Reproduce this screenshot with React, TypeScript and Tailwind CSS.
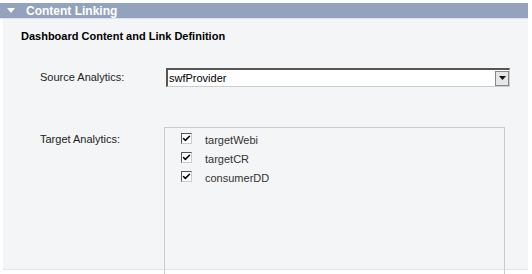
import { Check } from 'lucide-react'

const targets = ['targetWebi', 'targetCR', 'consumerDD']

export default function App() {
  return (
    <div className="w-[532px] h-[274px] overflow-hidden bg-white pt-[3px] pr-[4px] font-['Liberation_Sans',Arial,sans-serif] text-[11px] text-[#222]">
      {/* Section header */}
      <div className="h-[16px] bg-[#94a3bd] flex items-center border-b border-[#d9e2ee]">
        <svg width="8" height="6" viewBox="0 0 8 6" className="ml-[7px] mr-[11px]">
          <path d="M0 0h8L4 5z" fill="#fff" />
        </svg>
        <span className="text-white font-bold text-[12px] leading-none">Content Linking</span>
      </div>

      <div className="bg-[#f4f5f7] h-[251px] ml-[3px] pl-[18px] pt-[10px] border-b border-[#e2e4e7]">
        <h2 className="font-bold text-[11px] text-black leading-[14px]">
          Dashboard Content and Link Definition
        </h2>

        {/* Source */}
        <div className="flex items-center mt-[25px]">
          <span className="w-[145px] pl-[19px]">Source Analytics:</span>
          <div className="w-[344px] h-[19px] bg-white border-t-2 border-l-2 border-t-[#555] border-l-[#555] border-b border-r border-b-[#ccc] border-r-[#ccc] flex items-center">
            <span className="flex-1 pl-[1px] text-black">swfProvider</span>
            <div className="w-[14px] h-[15px] bg-[#e6e6e6] border border-[#888] flex items-center justify-center">
              <svg width="7" height="4" viewBox="0 0 7 4">
                <path d="M0 0h7L3.5 4z" fill="#111" />
              </svg>
            </div>
          </div>
        </div>

        {/* Target */}
        <div className="flex mt-[40px]">
          <span className="w-[143px] pl-[19px] pt-[4px]">Target Analytics:</span>
          <div className="w-[341px] h-[160px] border-t border-l border-r border-[#c9cbcf] pl-[16px] pt-[4px] flex flex-col gap-[6px]">
            {targets.map((t) => (
              <div key={t} className="flex items-center h-[13px]">
                <div className="w-[11px] h-[11px] bg-white border-t border-l border-[#555] border-b border-r border-b-[#ccc] border-r-[#ccc] flex items-center justify-center">
                  <Check size={9} strokeWidth={4} className="text-black" />
                </div>
                <span className="ml-[13px] pt-[3px] text-[#333]">{t}</span>
              </div>
            ))}
          </div>
        </div>
      </div>
    </div>
  )
}
